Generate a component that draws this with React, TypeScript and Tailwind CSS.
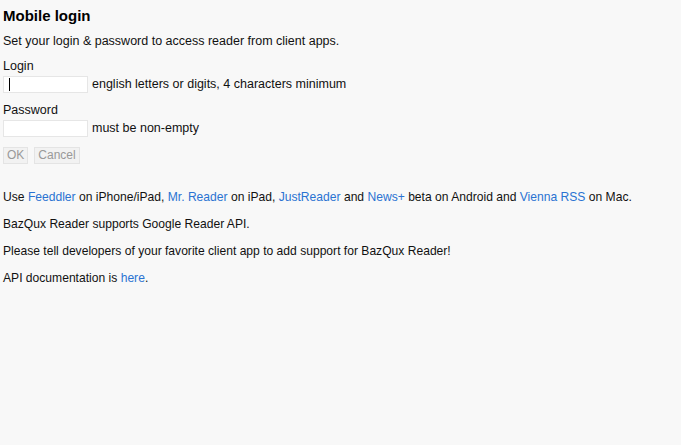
export default function App() {
  const link = 'text-[#2a73d2]';
  return (
    <div className="min-h-[445px] bg-[#f8f8f8] px-[3px] pt-[7px] text-[12.5px] leading-[15px] text-[#111] font-['Liberation_Sans',Arial,sans-serif]">
      <h1 className="text-[15px] font-bold leading-[18px] text-black">Mobile login</h1>
      <p className="mt-[9px]">Set your login &amp; password to access reader from client apps.</p>

      <div className="mt-[10px]">Login</div>
      <div className="mt-[2px] flex items-center">
        <div className="flex h-[17px] w-[85px] items-center border border-[#e6e6e6] bg-white pl-[5px]">
          <span className="h-[13px] w-px bg-black" />
        </div>
        <span className="ml-[4px]">english letters or digits, 4 characters minimum</span>
      </div>

      <div className="mt-[10px]">Password</div>
      <div className="mt-[2px] flex items-center">
        <div className="h-[17px] w-[85px] border border-[#e6e6e6] bg-white" />
        <span className="ml-[4px]">must be non-empty</span>
      </div>

      <div className="mt-[10px] flex gap-[6px]">
        <button className="h-[17px] border border-[#e4e4e4] bg-[#f2f2f2] px-[3px] text-[12px] leading-[15px] text-[#999]">OK</button>
        <button className="h-[17px] border border-[#e4e4e4] bg-[#f2f2f2] px-[3px] text-[12px] leading-[15px] text-[#999]">Cancel</button>
      </div>

      <div className="mt-[26px] flex flex-col gap-[12px] text-[12.1px]">
        <p>
          Use <span className={link}>Feeddler</span> on iPhone/iPad, <span className={link}>Mr. Reader</span> on iPad,{' '}
          <span className={link}>JustReader</span> and <span className={link}>News+</span> beta on Android and{' '}
          <span className={link}>Vienna RSS</span> on Mac.
        </p>
        <p>BazQux Reader supports Google Reader API.</p>
        <p>Please tell developers of your favorite client app to add support for BazQux Reader!</p>
        <p>
          API documentation is <span className={link}>here</span>.
        </p>
      </div>
    </div>
  );
}
